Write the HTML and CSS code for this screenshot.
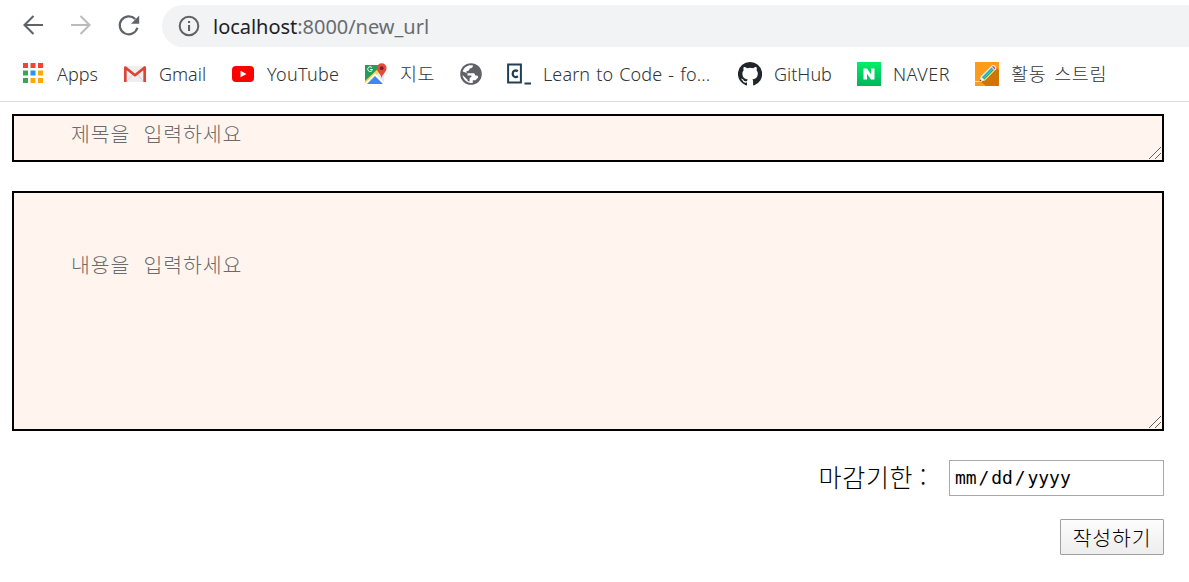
FILE: index.html
```html
<!DOCTYPE html>
<html lang="ko">
<head>
<meta charset="utf-8">
<title>new_url</title>
<link rel="stylesheet" href="styles.css">
</head>
<body>
<header class="browser">
  <div class="toolbar">
    <svg class="nav" width="24" height="24" viewBox="0 0 24 24" fill="none" stroke="#5f6368" stroke-width="2.1"><path d="M22 12H3.5M12.5 3L3.500 12l9 9"/></svg>
    <svg class="nav" width="24" height="24" viewBox="0 0 24 24" fill="none" stroke="#babcbe" stroke-width="2.1"><path d="M2 12h18.500M11.500 3l9 9-9 9"/></svg>
    <svg class="nav" width="24" height="24" viewBox="0 0 24 24"><path d="M20.400 14.800A9 9 0 1 1 18.200 6" fill="none" stroke="#5f6368" stroke-width="2.2"/><path d="M22.200 2.600v8.100h-8.100z" fill="#5f6368"/></svg>
    <div class="address">
      <svg width="22" height="22" viewBox="0 0 22 22"><circle cx="11" cy="11" r="9.3" fill="none" stroke="#5f6368" stroke-width="2"/><path d="M10 10h2.100v6H10zM10 6h2.100v2.100H10z" fill="#5f6368"/></svg>
      <span class="url"><span class="host">localhost</span>:8000/new_url</span>
    </div>
  </div>
  <nav class="bookmarks">
    <a class="bookmark"><svg width="24" height="24" viewBox="0 0 24 24"><path d="M2 1h5v5H2zM9.500 1h5v5h-5zM17 1h5v5h-5z" fill="#f44336"/><path d="M2 8.500h5v5H2zM2 16h5v5H2z" fill="#34a853"/><path d="M9.500 8.500h5v5h-5z" fill="#2196f3"/><path d="M17 8.500h5v5h-5zM9.500 16h5v5h-5zM17 16h5v5h-5z" fill="#f9ab00"/></svg><span class="label apps">Apps</span></a>
    <a class="bookmark"><svg width="24" height="24" viewBox="0 0 24 24"><path d="M2 4h20v16H2z" fill="#eee"/><path d="M4 19l6-7M20 19l-6-7" stroke="#d5d5d5"/><path d="M2.300 20V5.500L12 13.200 21.700 5.500V20" fill="none" stroke="#db4437" stroke-width="2.700" stroke-linejoin="round"/></svg><span class="label gmail">Gmail</span></a>
    <a class="bookmark"><svg width="24" height="24" viewBox="0 0 24 24"><rect x="1" y="4" width="22" height="16" rx="4" fill="#f00"/><path d="M9.500 8.700v6.600l6-3.300z" fill="#fff"/></svg><span class="label youtube">YouTube</span></a>
    <a class="bookmark"><svg width="24" height="24" viewBox="0 0 24 24"><path d="M1 3h19v19H1z" fill="#279b5b"/><path d="M1 22L20 3v19z" fill="#e8eaed"/><path d="M1 19L18 3l2 2L4 22H1z" fill="#fdd54f"/><path d="M3 22l8-8 8 8z" fill="#4285f4"/><path d="M1.500 22L11 12.500 20.500 22" fill="none" stroke="#fff" stroke-width="1.700"/><path d="M8.500 7.500H6.200m1.700-2a2.400 2.400 0 1 0 .6 2" fill="none" stroke="#fff"/><path d="M12.800 6.200a4.900 4.900 0 0 1 9.800 0c0 4-4 5-4.900 10-.9-5-4.900-6-4.900-10z" fill="#e34b3e"/><circle cx="17.700" cy="6.200" r="1.900" fill="#7d211b"/></svg><span class="label map">지도</span></a>
    <a class="bookmark"><svg width="24" height="24" viewBox="0 0 24 24"><circle cx="12" cy="12" r="10.800" fill="#5f6368"/><path d="M14 3.600c0 2-1.500 2.800-3.400 2.900-.2 2-1.300 2.500-3 2.600v2.100h7c1.100 0 1.500.9 1.500 2.400h1.500c1 0 1.500.9 1.600 1.900l-2.700 2.800h-2.700v2.500c-4.900 1.100-10-3-10.200-7.700l5.100 4.900v1.200h1.900v-3.100l1.800-1.200v-1.400H8.500v-2.200L3.700 9.500C5 5.100 9.500 2.400 14 3.600z" fill="#fff"/></svg></a>
    <a class="bookmark"><svg width="24" height="24" viewBox="0 0 24 24"><path d="M1.100 2.600h12.800v17.800H1.100zM17.500 21.500h6.500" fill="none" stroke="#204056" stroke-width="2"/><path d="M10.800 9.200c-2.600-1.700-5.100-.1-5.100 2.700s2.700 4.200 5.200 2.400" fill="none" stroke="#204056" stroke-width="2.300"/></svg><span class="label code">Learn to Code - fo...</span></a>
    <a class="bookmark"><svg width="24" height="24" viewBox="0 0 24 24"><path d="M12 0a12 12 0 0 0-3.800 23.400c.6.100.8-.3.800-.6v-2.200c-3.300.7-4-1.400-4-1.400-.6-1.400-1.400-1.800-1.400-1.800-1.100-.8.100-.7.100-.7 1.200.1 1.800 1.200 1.800 1.200 1.100 1.900 2.900 1.300 3.600 1 .1-.8.400-1.300.8-1.600-2.700-.3-5.500-1.300-5.500-5.900 0-1.300.5-2.400 1.300-3.200-.2-.4-.6-1.600.1-3.200 0 0 1-.4 3.300 1.200a11.500 11.500 0 0 1 6 0c2.300-1.600 3.300-1.200 3.300-1.200.7 1.600.3 2.800.1 3.200.8.800 1.300 1.900 1.300 3.200 0 4.600-2.800 5.600-5.500 5.900.4.400.8 1.100.8 2.200v3.300c0 .3.200.7.800.6A12 12 0 0 0 12 0z" fill="#20262b"/></svg><span class="label github">GitHub</span></a>
    <a class="bookmark"><svg width="24" height="24" viewBox="0 0 24 24"><defs><linearGradient id="green" x2="0" y2="1"><stop stop-color="#00ef69"/><stop offset="1" stop-color="#00b45c"/></linearGradient></defs><path d="M0 0h24v24H0z" fill="url(#green)"/><path d="M6.500 6.500H10l4 5.900V6.500h3.500v11.100H14l-4-5.900v5.900H6.500z" fill="#fff"/></svg><span class="label naver">NAVER</span></a>
    <a class="bookmark"><svg width="24" height="24" viewBox="0 0 24 24"><path d="M0 0h24v24H0z" fill="#ff9b1b"/><path d="M22 6l2 2v16H11l-5-4z" fill="#cf7500"/><path d="M0 19.500h7" stroke="#ffe0a5"/><path d="M4.500 19.500l1.200-5L17 3.200c2.200-1.100 5.100 1.800 4 4L9.800 18.400z" fill="#fff1d7"/><path d="M6.800 15.300L16.500 5.600l1.500 1.500-9.700 9.700z" fill="#16b7de"/><path d="M8.300 16.800L18 7.100l1 1-9.700 9.700z" fill="#35ad49"/><path d="M17 4.700c1.500-1.500 4.200 1.100 2.700 2.700z" fill="#b24bc2"/><path d="M4.500 19.500l.6-2.200 1.600 1.600z" fill="#555"/></svg><span class="label stream">활동 스트림</span></a>
  </nav>
</header>
<main class="form">
  <div class="field title" role="textbox" aria-multiline="true"><span class="hint">제목을 입력하세요</span><svg class="grip" width="14" height="14" viewBox="0 0 14 14"><path d="M1 13L13 1M7 13l6-6"/></svg></div>
  <div class="field content" role="textbox" aria-multiline="true"><span class="hint">내용을 입력하세요</span><svg class="grip" width="14" height="14" viewBox="0 0 14 14"><path d="M1 13L13 1M7 13l6-6"/></svg></div>
  <div class="deadline"><span class="deadline-label">마감기한 :</span><div class="date">mm<i class="slash">/</i>dd<i class="slash">/</i>yyyy</div></div>
  <button class="submit">작성하기</button>
</main>
</body>
</html>
```
FILE: styles.css
```css
* { box-sizing: border-box; }
body { margin: 0; background: #fff; color: #000; font-family: "Noto Sans", "Noto Sans CJK KR", sans-serif; overflow: hidden; }
svg { display: block; flex: none; }
.browser { height: 102px; border-bottom: 1px solid #d9dadc; }
.toolbar { display: flex; align-items: center; height: 47px; padding: 5px 0 0 21px; gap: 24px; }
.nav { margin-top: -2px; }
.address { display: flex; align-items: center; flex: 1; height: 42px; margin-left: -3px; padding-left: 16px; gap: 13px; background: #f1f3f4; border-radius: 21px 0 0 21px; }
.url { padding-top: 2px; font-size: 20px; line-height: 30px; color: #696c70; letter-spacing: -.03px; white-space: nowrap; }
.host { color: #202124; }
.bookmarks { display: grid; grid-template-columns: 102px 108px 133px 95px 48px 231px 119px 118px auto; padding: 0 0 0 21px; height: 54px; align-items: center; }
.bookmark { display: flex; align-items: center; gap: 12px; color: #303438; }
.label { font-size: 18px; font-weight: 300; line-height: 26px; white-space: nowrap; padding-bottom: 1px; }
.youtube { letter-spacing: .3px; }
.code { letter-spacing: .1px; word-spacing: 1.3px; }
.naver { letter-spacing: .5px; }
.map, .stream { font-family: "Noto Sans CJK KR", sans-serif; font-size: 18.500px; padding-bottom: 3px; }
.stream { letter-spacing: .65px; word-spacing: 2px; }
.map { letter-spacing: .4px; }
.form { display: flex; flex-direction: column; align-items: flex-end; padding: 12px 25px 0 12px; }
.field { position: relative; width: 100%; border: 2px solid #000; background: #fff4ee; padding-left: 57px; }
.title { height: 48px; padding-top: 3px; margin-bottom: 29px; }
.content { height: 240px; padding-top: 57px; margin-bottom: 29px; }
.hint { display: block; color: #6b6b6b; font: 300 20.500px/28px "Noto Sans CJK KR", sans-serif; letter-spacing: .9px; word-spacing: 6.500px; }
.grip { position: absolute; right: 0; bottom: 0; fill: none; stroke: #626262; stroke-width: 1; shape-rendering: crispEdges; }
.deadline { display: flex; align-items: center; height: 36px; gap: 22px; margin-bottom: 23px; }
.deadline-label { padding-bottom: 4px; font: 300 25px/34px "Noto Sans CJK KR", sans-serif; letter-spacing: .7px; word-spacing: -1px; }
.date { display: flex; align-items: center; width: 215px; height: 36px; border: 1px solid #a9a9a9; padding-left: 5px; font: 18px/26px "DejaVu Sans Mono", monospace; }
.slash { font-style: normal; width: 14.500px; text-align: center; }
.submit { width: 104px; height: 36px; padding: 0; border: 1px solid #a0a0a0; border-radius: 1px; background: linear-gradient(#fdfdfd, #ededed); color: #000; font: 300 20.500px/28px "Noto Sans CJK KR", sans-serif; letter-spacing: .8px; }
```
